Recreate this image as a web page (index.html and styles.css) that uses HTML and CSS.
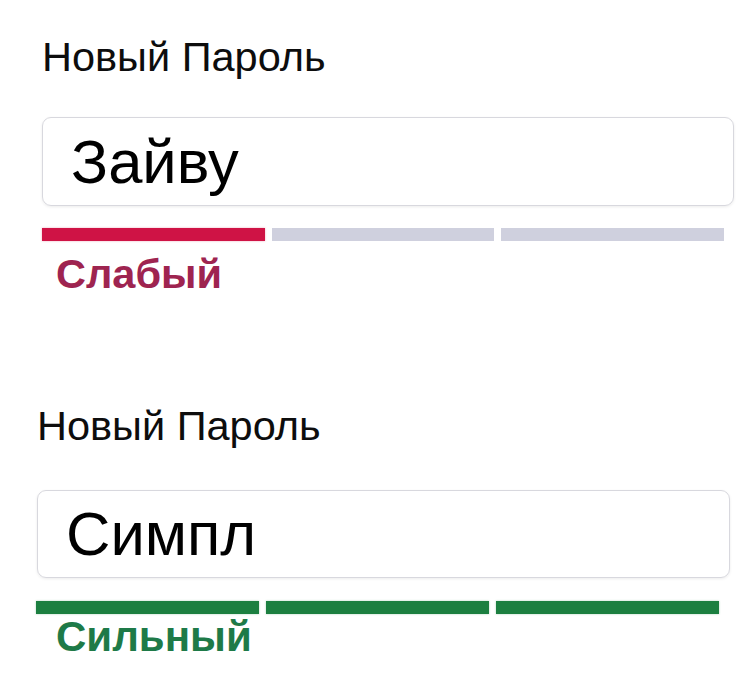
FILE: index.html
```html
<!DOCTYPE html>
<html lang="ru">
<head>
<meta charset="utf-8">
<title>Новый Пароль</title>
<link rel="stylesheet" href="styles.css">
</head>
<body>
<main class="page">
  <section class="field field--weak">
    <div class="field-label">Новый Пароль</div>
    <div class="field-input">Зайву</div>
    <div class="meter">
      <span class="meter-seg meter-seg--weak"></span>
      <span class="meter-seg"></span>
      <span class="meter-seg"></span>
    </div>
    <div class="meter-text meter-text--weak">Слабый</div>
  </section>
  <section class="field field--strong">
    <div class="field-label">Новый Пароль</div>
    <div class="field-input">Симпл</div>
    <div class="meter">
      <span class="meter-seg meter-seg--strong"></span>
      <span class="meter-seg meter-seg--strong"></span>
      <span class="meter-seg meter-seg--strong"></span>
    </div>
    <div class="meter-text meter-text--strong">Сильный</div>
  </section>
</main>
</body>
</html>
```

FILE: styles.css
```css
* { box-sizing: border-box; }
html, body { margin: 0; padding: 0; background: #fff; }
body {
  font-family: "Liberation Sans", Arial, sans-serif;
  color: #111;
  width: 750px;
  height: 696px;
  overflow: hidden;
}
.page {
  display: flex;
  flex-direction: column;
  padding-top: 33px;
}
.field {
  display: flex;
  flex-direction: column;
}
.field--weak { padding-left: 42px; width: 734px; }
.field--strong { padding-left: 37px; width: 730px; margin-top: 106px; }

.field-label {
  font-size: 41.5px;
  line-height: 48px;
  color: #0d0d0d;
}
.field-input {
  height: 89px;
  border: 1px solid #d8d8de;
  border-radius: 9px;
  box-shadow: 0 1px 3px rgba(0,0,0,0.08);
  padding-left: 28px;
  font-size: 61.5px;
  line-height: 87px;
  color: #000;
  white-space: nowrap;
}
.field--weak .field-input { margin-top: 36px; }
.field--strong .field-input { margin-top: 40px; height: 88px; line-height: 86px; }

.meter {
  display: flex;
  gap: 7px;
  height: 13px;
  margin-right: 10px;
}
.field--weak .meter { margin-top: 22px; }
.field--strong .meter { margin-top: 23px; margin-right: 11px; margin-left: -1px; }
.meter-seg {
  flex: 1;
  background: #cfd0de;
}
.meter-seg--weak { background: #cf1345; box-shadow: 0 0 2px rgba(207,19,69,0.35); }
.meter-seg--strong { background: #1c7f40; box-shadow: 0 0 2px rgba(28,127,64,0.35); }

.meter-text {
  font-weight: bold;
  line-height: 44px;
}
.meter-text--weak { color: #9e2450; margin-top: 11px; font-size: 41.5px; padding-left: 14px; }
.meter-text--strong { color: #1e7a48; margin-top: 1px; font-size: 42px; padding-left: 19px; }
```
